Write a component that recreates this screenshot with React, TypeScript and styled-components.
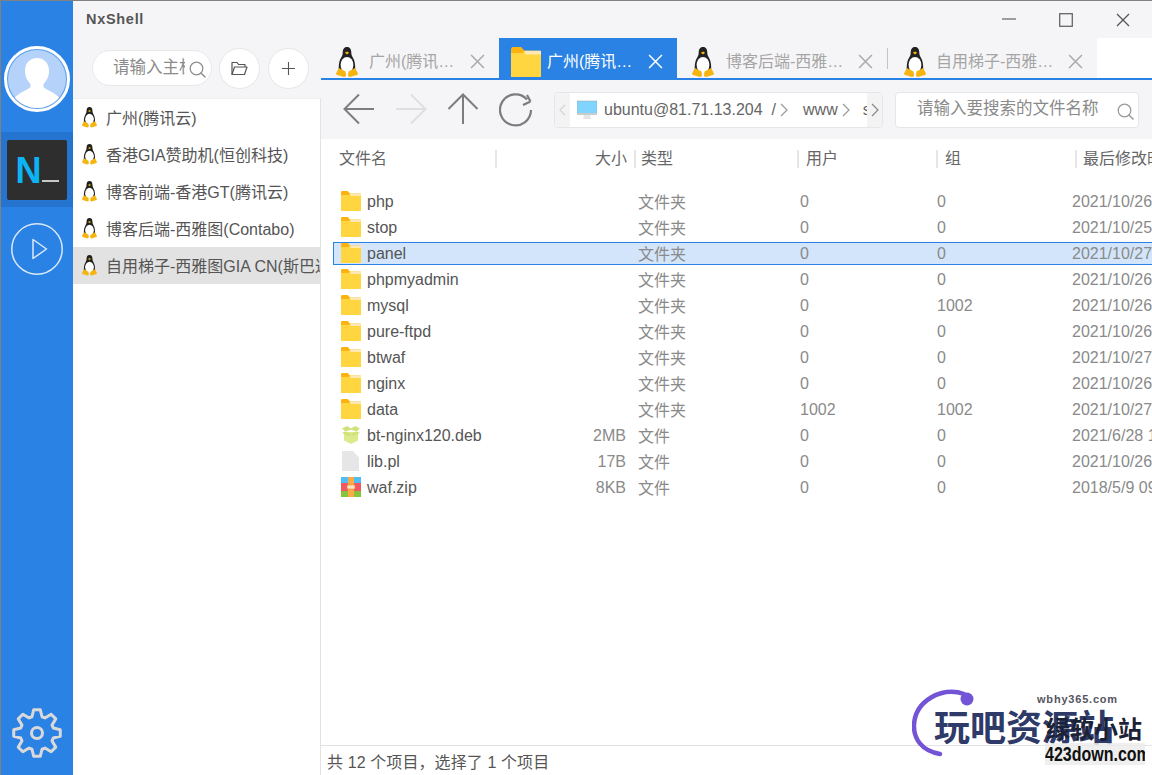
import React from 'react';
import styled, { createGlobalStyle } from 'styled-components';

const GlobalStyle = createGlobalStyle`
  html, body { margin: 0; padding: 0; background: #fff; overflow: hidden; }
  * { box-sizing: border-box; }
  body { font-family: "Liberation Sans", "Noto Sans CJK SC", sans-serif; }
`;

const Window = styled.div`
  width: 1152px;
  height: 775px;
  display: flex;
  border-top: 1px solid #808080;
  border-left: 1px solid #808080;
  position: relative;
  overflow: hidden;
`;

const Rail = styled.nav`
  width: 72px;
  flex: none;
  background: #2a82e4;
  display: flex;
  flex-direction: column;
  align-items: center;
  padding: 45px 0 16px;
`;

const Avatar = styled.div`
  width: 66px;
  height: 66px;
  border-radius: 50%;
  border: 3px solid #fff;
  padding: 1px;
  background: #5b9fec;
  svg { display: block; width: 58px; height: 58px; border-radius: 50%; }
`;

const RailActive = styled.div`
  width: 72px;
  height: 75px;
  margin-top: 20px;
  background: #2574d0;
  display: flex;
  align-items: center;
  justify-content: center;
`;

const AppTile = styled.div`
  width: 60px;
  height: 60px;
  background: #2e2e2e;
  border-radius: 2px;
  display: flex;
  align-items: center;
  justify-content: center;
  padding-top: 2px;
`;

const TileN = styled.span`
  font-size: 36px;
  line-height: 1;
  font-weight: 700;
  color: #0cb4f5;
`;

const TileBar = styled.span`
  width: 17px;
  height: 2px;
  background: #c8c8c8;
  margin-top: 20px;
`;

const RailIcon = styled.div`
  margin-top: 16px;
  height: 52px;
  svg { display: block; }
`;

const RailBottom = styled.div`
  margin-top: auto;
  height: 52px;
  svg { display: block; }
`;

const Main = styled.div`
  flex: 1;
  min-width: 0;
  display: flex;
  flex-direction: column;
`;

const TitleBar = styled.header`
  height: 37px;
  flex: none;
  background: #f5f5f7;
  display: flex;
  align-items: center;
  padding-left: 13px;
`;

const AppName = styled.div`
  font-size: 14.5px;
  font-weight: 700;
  color: #555;
  letter-spacing: 0.7px;
  margin-top: -1px;
`;

const WinButtons = styled.div`
  margin-left: auto;
  margin-right: 22px;
  display: flex;
  gap: 43px;
  margin-top: 1px;
  svg { display: block; }
`;

const Body = styled.div`
  flex: 1;
  min-height: 0;
  display: flex;
`;

const LeftPane = styled.aside`
  width: 248px;
  flex: none;
  display: flex;
  flex-direction: column;
`;

const SearchRow = styled.div`
  height: 60px;
  flex: none;
  background: #f5f5f7;
  display: flex;
  align-items: flex-start;
  padding: 10px 0 0 19px;
  gap: 7px;
`;

const HostSearch = styled.div`
  width: 120px;
  height: 36px;
  margin-top: 2px;
  background: #fff;
  border: 1px solid #e8e8e8;
  border-radius: 18px;
  display: flex;
  align-items: center;
  padding: 0 0 5px 20px;
  position: relative;
  svg { position: absolute; left: 96px; top: 10px; }
`;

const Placeholder = styled.span`
  font-size: 16.500px;
  color: #8a8a8a;
  width: 72px;
  overflow: hidden;
  white-space: nowrap;
`;

const RoundButton = styled.button`
  width: 41px;
  height: 41px;
  padding: 0;
  border-radius: 50%;
  border: 1px solid #e6e6e6;
  background: #fff;
  display: flex;
  align-items: center;
  justify-content: center;
  &:last-child { margin-left: 1px; }
`;

const HostList = styled.ul`
  flex: 1;
  list-style: none;
  margin: 0;
  padding: 0;
  background: #fff;
  border-right: 1px solid #e2e2e2;
  border-top: 1px solid #eee;
  overflow: hidden;
`;

const HostRow = styled.li<{ $active?: boolean }>`
  height: 37px;
  display: flex;
  align-items: center;
  padding-left: 9px;
  gap: 9px;
  font-size: 16px;
  color: #555;
  white-space: nowrap;
  background: ${(p) => (p.$active ? '#e2e2e2' : 'transparent')};
  svg { flex: none; }
`;

const HostName = styled.span`
  margin-top: -2px;
`;

const RightPane = styled.section`
  flex: 1;
  min-width: 0;
  display: flex;
  flex-direction: column;
  position: relative;
`;

const TabStrip = styled.div`
  height: 42px;
  flex: none;
  display: flex;
  background: #f5f5f7;
  border-bottom: 2px solid #2a82e4;
`;

const Tab = styled.div<{ $active?: boolean; $width: number; $pad: number; $divider?: boolean }>`
  width: ${(p) => p.$width}px;
  height: 40px;
  flex: none;
  display: flex;
  align-items: center;
  padding-left: ${(p) => p.$pad}px;
  font-size: 16px;
  color: ${(p) => (p.$active ? '#fff' : '#a5a5a5')};
  background: ${(p) => (p.$active ? '#2a82e4' : 'transparent')};
  position: relative;
  white-space: nowrap;
  &::before {
    content: '';
    display: ${(p) => (p.$divider ? 'block' : 'none')};
    position: absolute;
    left: 0;
    top: 10px;
    height: 21px;
    border-left: 1px solid #c4c4c4;
  }
`;

const TabIcon = styled.span<{ $width: number }>`
  width: ${(p) => p.$width}px;
  flex: none;
  display: flex;
  margin-top: 8px;
  svg { flex: none; }
`;

const TabLabel = styled.span<{ $width: number }>`
  width: ${(p) => p.$width}px;
  margin-left: 4px;
  overflow: hidden;
  text-overflow: ellipsis;
  margin-top: 4px;
`;

const TabClose = styled.span<{ $right: number }>`
  position: absolute;
  right: ${(p) => p.$right}px;
  top: 16px;
  height: 14px;
  svg { display: block; }
`;

const TabFill = styled.div`
  flex: 1;
  height: 40px;
  background: #fff;
`;

const Toolbar = styled.div`
  height: 59px;
  flex: none;
  background: #f5f5f7;
  display: flex;
  align-items: center;
  padding: 0 13px 0 22px;
`;

const NavIcons = styled.div`
  display: flex;
  gap: 20px;
  width: 211px;
  flex: none;
  svg { display: block; }
`;

const Breadcrumb = styled.div`
  width: 329px;
  height: 36px;
  flex: none;
  background: #fff;
  border: 1px solid #e6e6e6;
  border-radius: 4px;
  display: flex;
  align-items: center;
  font-size: 16px;
  color: #666;
  overflow: hidden;
`;

const CrumbEnd = styled.div`
  width: 15px;
  height: 100%;
  flex: none;
  background: #f3f3f3;
  display: flex;
  align-items: center;
  justify-content: center;
`;

const CrumbTrack = styled.div`
  flex: 1;
  min-width: 0;
  display: flex;
  align-items: center;
  padding: 1px 0 0 7px;
  overflow: hidden;
  white-space: nowrap;
  svg { flex: none; }
`;

const CrumbItem = styled.span<{ $gap: number }>`
  margin-left: ${(p) => p.$gap}px;
  display: flex;
  align-items: center;
  gap: 4px;
  flex: none;
`;

const FileSearch = styled.div`
  width: 244px;
  height: 36px;
  margin-left: 12px;
  flex: none;
  background: #fff;
  border: 1px solid #e6e6e6;
  border-radius: 4px;
  display: flex;
  align-items: center;
  padding: 0 0 5px 21px;
  font-size: 16.500px;
  color: #8a8a8a;
  position: relative;
  svg { position: absolute; right: 4px; top: 10px; }
`;

const HeaderRow = styled.div`
  height: 38px;
  flex: none;
  display: grid;
  grid-template-columns: 176px 139px 163px 139px 139px 80px;
  align-items: center;
  padding-top: 1px;
  font-size: 16px;
  color: #666;
  white-space: nowrap;
  overflow: hidden;
`;

const HeaderCell = styled.div<{ $right?: boolean; $pad?: number }>`
  height: 18px;
  line-height: 18px;
  padding-left: ${(p) => p.$pad ?? 7}px;
  padding-right: ${(p) => (p.$right ? 7 : 0)}px;
  text-align: ${(p) => (p.$right ? 'right' : 'left')};
  border-right: 2px solid #e6e6e6;
  &:last-child { border-right: 0; }
`;

const FileList = styled.div`
  flex: 1;
  padding-top: 11px;
  min-height: 0;
  overflow: hidden;
`;

const FileRow = styled.div<{ $selected?: boolean }>`
  height: 26px;
  margin-left: 12px;
  display: grid;
  grid-template-columns: 34px 271px 162px 137px 135px 100px;
  align-items: center;
  font-size: 16px;
  color: #8a8a8a;
  white-space: nowrap;
  overflow: hidden;
  position: relative;
  isolation: isolate;
  &::before {
    content: '';
    display: ${(p) => (p.$selected ? 'block' : 'none')};
    position: absolute;
    z-index: -1;
    top: 2px;
    bottom: 1px;
    left: 0;
    right: -2px;
    background: #d3e5fa;
    border: 1px solid #2a82e4;
  }
`;

const FileIcon = styled.span`
  padding-left: 8px;
  display: flex;
`;

const FileName = styled.span`
  color: #555;
  display: flex;
  justify-content: space-between;
  padding-right: 12px;
  margin-top: 2px;
`;

const FileSize = styled.span`
  color: #8a8a8a;
`;

const TypeCell = styled.span`
  margin-top: -1px;
`;

const NumberCell = styled.span`
  margin-top: 2px;
`;

const StatusBar = styled.footer`
  height: 30px;
  flex: none;
  background: #fff;
  border-top: 1px solid #e2e2e2;
  padding-left: 6px;
  display: flex;
  align-items: center;
  font-size: 16px;
  letter-spacing: 0.1px;
  color: #555;
`;

const Watermark = styled.div`
  position: absolute;
  left: 911px;
  top: 686px;
  width: 241px;
  height: 89px;
  svg { position: absolute; left: 0; top: 0; }
`;

const WatermarkUrl = styled.span`
  position: absolute;
  left: 125px;
  top: 6px;
  font-size: 11px;
  font-weight: 700;
  letter-spacing: 0.8px;
  color: #55555f;
`;

const WatermarkTitle = styled.span`
  position: absolute;
  left: 22px;
  top: 21px;
  font-size: 36px;
  line-height: 42px;
  font-weight: 700;
  color: #2e3a68;
  white-space: nowrap;
`;

const WatermarkSmudge = styled.span`
  position: absolute;
  left: 134px;
  top: 30px;
  font-size: 24px;
  line-height: 26px;
  font-weight: 700;
  color: #1c2236;
  white-space: nowrap;
`;

const WatermarkDown = styled.span`
  position: absolute;
  left: 133px;
  top: 56px;
  width: 100px;
  height: 22px;
  background: rgba(235, 235, 235, 0.8);
  overflow: hidden;
`;

const WatermarkDownText = styled.span`
  display: block;
  font-size: 20px;
  line-height: 22px;
  font-weight: 700;
  text-align: center;
  color: #111;
  white-space: nowrap;
  transform: scaleX(0.8);
  transform-origin: left center;
  width: 125px;
`;

const Penguin = ({ size = 22 }: { size?: number }) => (
  <svg width={size} height={(size * 30) / 22} viewBox="0 0 22 30">
    <path d="M11 0C7.800 0 6.700 2.500 6.700 5.500c0 2-.5 3.500-1.500 5C3.700 13 2.500 16 2.800 24h16.400c.3-8-.9-11-2.400-13.500-1-1.500-1.500-3-1.500-5C15.300 2.500 14.200 0 11 0z" fill="#222" />
    <ellipse cx="11" cy="18" rx="6.400" ry="8" fill="#fff" />
    <path d="M8.800 5.800 11 4.500l2.200 1.300L11 7.500z" fill="#f6b40e" />
    <path d="M3 21 0 26.500Q0 28 2 28.300L8 30Q10 30 10 28L9.500 24.500z" fill="#f6b40e" />
    <path d="M19 21l3 5.500Q22 28 20 28.300L14 30Q12 30 12 28l.5-3.500z" fill="#f6b40e" />
  </svg>
);

const Folder = ({ width = 20, height = 20 }: { width?: number; height?: number }) => (
  <svg width={width} height={height} viewBox="0 0 20 20">
    <path d="M0 1.500c0-.8.500-1.500 1.300-1.500h5.400L9 2.500h10c.6 0 1 .4 1 1V7H0z" fill="#fcb30f" />
    <path d="M8.600 2.500H20V6H8.600z" fill="#fde9b4" />
    <path d="M0 4h7.600l1.800-1.500L9.400 5H20v15H0z" fill="#ffd540" />
  </svg>
);

const Cross = ({ size = 14, color = '#a9a9a9', width = 1.4 }: { size?: number; color?: string; width?: number }) => (
  <svg width={size} height={size} viewBox="0 0 14 14">
    <path d="M1 1l12 12M13 1 1 13" stroke={color} strokeWidth={width} fill="none" />
  </svg>
);

const Magnifier = ({ color = '#8f8f8f', size = 17 }: { color?: string; size?: number }) => (
  <svg width={size} height={size} viewBox="0 0 17 17" fill="none">
    <circle cx="7.500" cy="7.500" r="6.300" stroke={color} strokeWidth="1.300" />
    <path d="m12 12 4 4" stroke={color} strokeWidth="1.500" strokeLinecap="round" />
  </svg>
);

const Chevron = ({ color = '#999' }: { color?: string }) => (
  <svg width="8" height="14" viewBox="0 0 8 14" fill="none">
    <path d="m1 1 6 6-6 6" stroke={color} strokeWidth="1.200" />
  </svg>
);

const gearPath = () => {
  const cx = 26;
  const cy = 26;
  const points: string[] = [];
  for (let i = 0; i < 8; i++) {
    const a = (i * Math.PI) / 4 - Math.PI / 2;
    const pt = (r: number, d: number) =>
      `${(cx + r * Math.cos(a + d)).toFixed(2)} ${(cy + r * Math.sin(a + d)).toFixed(2)}`;
    points.push(`${pt(17, -0.3)}`, `${pt(23.500, -0.14)}`, `${pt(23.500, 0.14)}`, `${pt(17, 0.3)}`);
  }
  return `M${points.join('L')}Z`;
};

const hosts = ['广州(腾讯云)', '香港GIA赞助机(恒创科技)', '博客前端-香港GT(腾讯云)', '博客后端-西雅图(Contabo)', '自用梯子-西雅图GIA CN(斯巴达)'];

type Kind = 'folder' | 'deb' | 'file' | 'zip';
const files: { name: string; size?: string; type: string; user: string; group: string; date: string; kind: Kind; selected?: boolean }[] = [
  { name: 'php', type: '文件夹', user: '0', group: '0', date: '2021/10/26', kind: 'folder' },
  { name: 'stop', type: '文件夹', user: '0', group: '0', date: '2021/10/25', kind: 'folder' },
  { name: 'panel', type: '文件夹', user: '0', group: '0', date: '2021/10/27', kind: 'folder', selected: true },
  { name: 'phpmyadmin', type: '文件夹', user: '0', group: '0', date: '2021/10/26', kind: 'folder' },
  { name: 'mysql', type: '文件夹', user: '0', group: '1002', date: '2021/10/26', kind: 'folder' },
  { name: 'pure-ftpd', type: '文件夹', user: '0', group: '0', date: '2021/10/26', kind: 'folder' },
  { name: 'btwaf', type: '文件夹', user: '0', group: '0', date: '2021/10/27', kind: 'folder' },
  { name: 'nginx', type: '文件夹', user: '0', group: '0', date: '2021/10/26', kind: 'folder' },
  { name: 'data', type: '文件夹', user: '1002', group: '1002', date: '2021/10/27', kind: 'folder' },
  { name: 'bt-nginx120.deb', size: '2MB', type: '文件', user: '0', group: '0', date: '2021/6/28 1', kind: 'deb' },
  { name: 'lib.pl', size: '17B', type: '文件', user: '0', group: '0', date: '2021/10/26', kind: 'file' },
  { name: 'waf.zip', size: '8KB', type: '文件', user: '0', group: '0', date: '2018/5/9 09', kind: 'zip' },
];

const KindIcon = ({ kind }: { kind: Kind }) => {
  if (kind === 'folder') return <Folder />;
  if (kind === 'deb')
    return (
      <svg width="20" height="20" viewBox="0 0 20 20">
        <path d="M3 7h14v8.500L10 19l-7-3.500z" fill="#dcea8e" />
        <path d="M1 3.500 6 1l4 2.500L14 1l5 2.500-3.500 3L10 4.800 4.500 6.500zM1 8l3-1.500L10 9l6-2.500L19 8l-6.500 3L10 9.500 7.500 11z" fill="#cfe27a" />
      </svg>
    );
  if (kind === 'file')
    return (
      <svg width="20" height="20" viewBox="0 0 20 20">
        <path d="M1 0h11l6 6.500V20H1z" fill="#e6e6e6" />
      </svg>
    );
  return (
    <svg width="20" height="20" viewBox="0 0 20 20">
      <rect width="20" height="6" fill="#50bdf5" />
      <rect y="6" width="20" height="8" fill="#f2585f" />
      <rect y="14" width="20" height="6" fill="#86c53a" />
      <rect x="7" width="6" height="20" fill="#fbab48" />
      <rect x="6" y="8" width="8" height="4" rx="1" fill="#fde3c0" stroke="#e8873a" strokeWidth="0.600" />
    </svg>
  );
};

const nav = '#7d7d7d';

const App: React.FC = () => (
  <>
    <GlobalStyle />
    <Window>
      <Rail>
        <Avatar>
          <svg viewBox="0 0 58 58">
            <rect width="58" height="58" fill="#b5d2fb" />
            <path d="M29 8c-7.500 0-12 5.500-12 13 0 5.500 2.500 10 5.500 13v3C19 41 8 42 3 54l6 4h40l6-4c-5-12-16-13-19.500-17v-3c3-3 5.500-7.500 5.500-13 0-7.500-4.500-13-12-13z" fill="#fff" />
          </svg>
        </Avatar>
        <RailActive>
          <AppTile>
            <TileN>N</TileN>
            <TileBar />
          </AppTile>
        </RailActive>
        <RailIcon>
          <svg width="52" height="52" viewBox="0 0 52 52" fill="none" stroke="#dbe9fb" strokeWidth="1.500">
            <circle cx="26" cy="26" r="25.200" />
            <path d="M22 16.500v19L35.500 26z" strokeLinejoin="round" />
          </svg>
        </RailIcon>
        <RailBottom>
          <svg width="52" height="52" viewBox="0 0 52 52" fill="none" stroke="#d9d9d9" strokeWidth="3" strokeLinejoin="round">
            <path d={gearPath()} />
            <circle cx="26" cy="26" r="5.500" />
          </svg>
        </RailBottom>
      </Rail>
      <Main>
        <TitleBar>
          <AppName>NxShell</AppName>
          <WinButtons>
            <svg width="14" height="14" viewBox="0 0 14 14"><path d="M0 6h14" stroke="#777" strokeWidth="1.400" /></svg>
            <svg width="14" height="14" viewBox="0 0 14 14"><rect x="0.700" y="0.700" width="12.600" height="12.600" fill="none" stroke="#666" strokeWidth="1.300" /></svg>
            <Cross color="#555" width={1.3} />
          </WinButtons>
        </TitleBar>
        <Body>
          <LeftPane>
            <SearchRow>
              <HostSearch>
                <Placeholder>请输入主机</Placeholder>
                <Magnifier />
              </HostSearch>
              <RoundButton aria-label="open">
                <svg width="17" height="15" viewBox="0 0 17 15" fill="none" stroke="#555" strokeWidth="1.200" strokeLinejoin="round">
                  <path d="M1 13.500V1.500h5l1.500 2H14v2.500" />
                  <path d="M1 13.500 3.500 6H16l-2.500 7.500z" />
                </svg>
              </RoundButton>
              <RoundButton aria-label="add">
                <svg width="15" height="15" viewBox="0 0 15 15"><path d="M7.500 1v13M1 7.500h13" stroke="#555" strokeWidth="1.100" /></svg>
              </RoundButton>
            </SearchRow>
            <HostList>
              {hosts.map((h, i) => (
                <HostRow key={h} $active={i === 4}>
                  <Penguin size={15} />
                  <HostName>{h}</HostName>
                </HostRow>
              ))}
            </HostList>
          </LeftPane>
          <RightPane>
            <TabStrip>
              <Tab $width={178} $pad={15}>
                <TabIcon $width={29}><Penguin /></TabIcon>
                <TabLabel $width={88}>广州(腾讯云)</TabLabel>
                <TabClose $right={14}><Cross size={15} /></TabClose>
              </Tab>
              <Tab $width={178} $pad={12} $active>
                <TabIcon $width={32}><Folder width={30} height={30} /></TabIcon>
                <TabLabel $width={88}>广州(腾讯云)</TabLabel>
                <TabClose $right={14}><Cross size={15} color="#fff" /></TabClose>
              </Tab>
              <Tab $width={210} $pad={15}>
                <TabIcon $width={30}><Penguin /></TabIcon>
                <TabLabel $width={120}>博客后端-西雅图(Contabo)</TabLabel>
                <TabClose $right={14}><Cross size={15} /></TabClose>
              </Tab>
              <Tab $width={210} $pad={17} $divider>
                <TabIcon $width={28}><Penguin /></TabIcon>
                <TabLabel $width={118}>自用梯子-西雅图GIA CN</TabLabel>
                <TabClose $right={14}><Cross size={15} /></TabClose>
              </Tab>
              <TabFill />
            </TabStrip>
            <Toolbar>
              <NavIcons>
                <svg width="32" height="32" viewBox="0 0 32 32" fill="none" stroke={nav} strokeWidth="2"><path d="M31 16H2M16 1.500 1.500 16 16 30.500" /></svg>
                <svg width="32" height="32" viewBox="0 0 32 32" fill="none" stroke="#dfdfdf" strokeWidth="2"><path d="M1 16h29M16 1.500 30.500 16 16 30.500" /></svg>
                <svg width="32" height="32" viewBox="0 0 32 32" fill="none" stroke={nav} strokeWidth="2"><path d="M16 31V2M1.500 16 16 1.500 30.500 16" /></svg>
                <svg width="34" height="34" viewBox="0 0 34 34" fill="none" stroke={nav} strokeWidth="2.200"><path d="M28 6.500A15.500 15.500 0 1 0 32 17M31.500 8.500 24 12M31.500 8.500 28 2" /></svg>
              </NavIcons>
              <Breadcrumb>
                <CrumbEnd>
                  <svg width="7" height="12" viewBox="0 0 7 12" fill="none"><path d="M6 1 1 6l5 5" stroke="#d5d5d5" strokeWidth="1.300" /></svg>
                </CrumbEnd>
                <CrumbTrack>
                  <svg width="20" height="20" viewBox="0 0 20 20">
                    <rect y="1" width="20" height="13" fill="#81d4fd" stroke="#9ba9b3" strokeWidth="0.500" />
                    <rect y="13" width="20" height="2" fill="#c9ccce" />
                    <path d="M7 15h6l1 4H6z" fill="#e2e4e6" />
                  </svg>
                  <CrumbItem $gap={7}>ubuntu@81.71.13.204</CrumbItem>
                  <CrumbItem $gap={9}>/<Chevron /></CrumbItem>
                  <CrumbItem $gap={15}>www<Chevron /></CrumbItem>
                  <CrumbItem $gap={13}>srv</CrumbItem>
                </CrumbTrack>
                <CrumbEnd><Chevron color="#888" /></CrumbEnd>
              </Breadcrumb>
              <FileSearch>
                请输入要搜索的文件名称
                <Magnifier color="#999" />
              </FileSearch>
            </Toolbar>
            <HeaderRow>
              <HeaderCell $pad={18}>文件名</HeaderCell>
              <HeaderCell $right>大小</HeaderCell>
              <HeaderCell $pad={5}>类型</HeaderCell>
              <HeaderCell>用户</HeaderCell>
              <HeaderCell>组</HeaderCell>
              <HeaderCell $pad={6}>最后修改时间</HeaderCell>
            </HeaderRow>
            <FileList>
              {files.map((f) => (
                <FileRow key={f.name} $selected={f.selected}>
                  <FileIcon><KindIcon kind={f.kind} /></FileIcon>
                  <FileName>
                    {f.name}
                    <FileSize>{f.size}</FileSize>
                  </FileName>
                  <TypeCell>{f.type}</TypeCell>
                  <NumberCell>{f.user}</NumberCell>
                  <NumberCell>{f.group}</NumberCell>
                  <NumberCell>{f.date}</NumberCell>
                </FileRow>
              ))}
            </FileList>
            <StatusBar>共 12 个项目，选择了 1 个项目</StatusBar>
          </RightPane>
        </Body>
      </Main>
      <Watermark>
        <svg width="70" height="80" viewBox="0 0 70 80" fill="none">
          <path d="M52 7C30 -1 3 14 2 38c-.5 14 8 26 26 29" stroke="#7454d6" strokeWidth="4.500" strokeLinecap="round" />
          <circle cx="55" cy="12" r="6.500" fill="#7454d6" />
        </svg>
        <WatermarkUrl>wbhy365.com</WatermarkUrl>
        <WatermarkTitle>玩吧资源站</WatermarkTitle>
        <WatermarkSmudge>绿软小站</WatermarkSmudge>
        <WatermarkDown><WatermarkDownText>423down.com</WatermarkDownText></WatermarkDown>
      </Watermark>
    </Window>
  </>
);

export default App;
